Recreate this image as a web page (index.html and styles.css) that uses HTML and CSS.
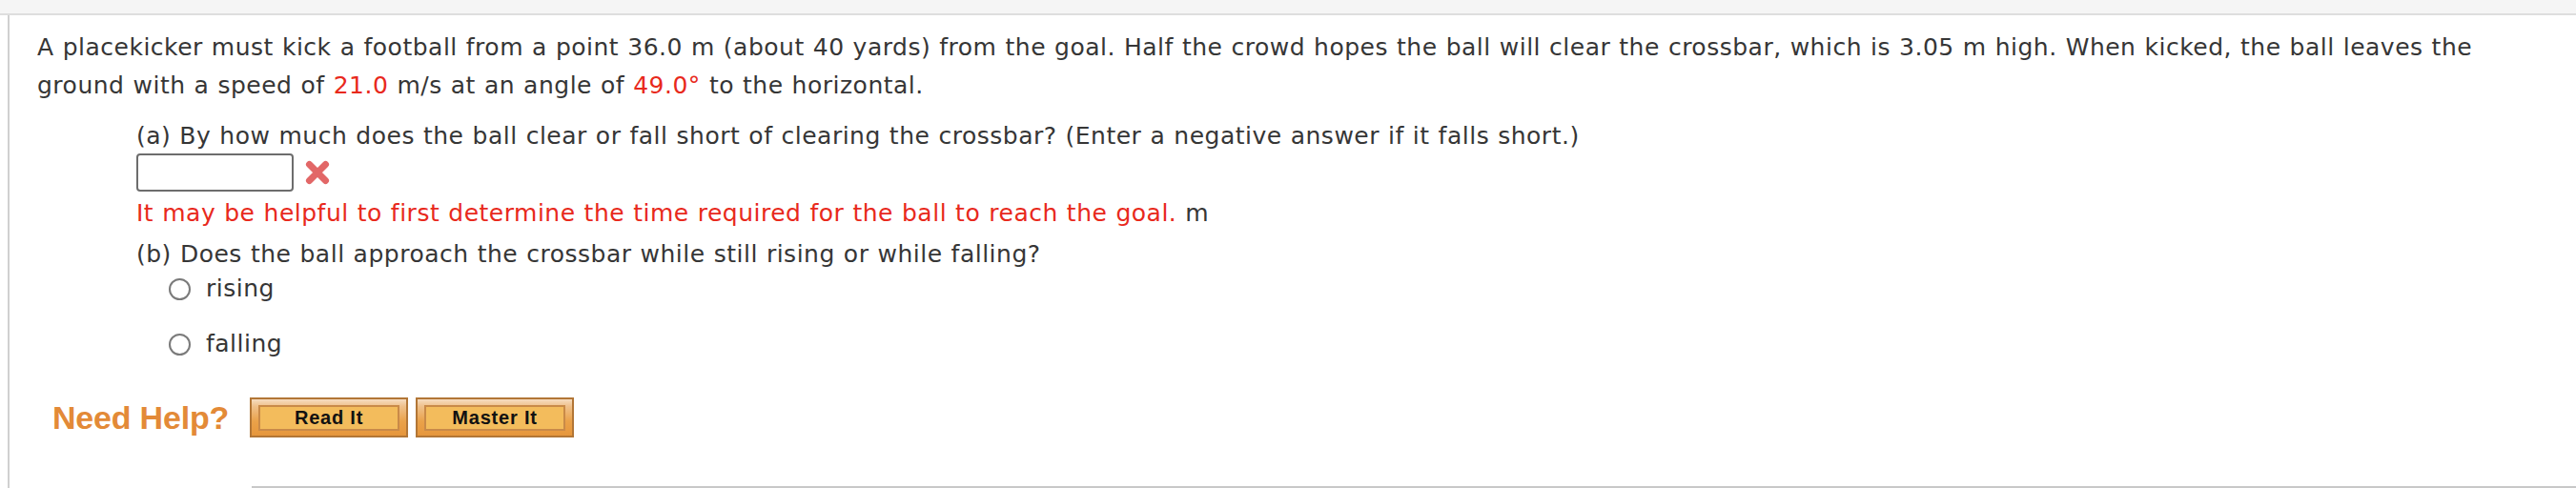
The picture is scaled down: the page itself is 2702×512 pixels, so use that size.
FILE: index.html
```html
<!DOCTYPE html>
<html lang="en">
<head>
<meta charset="utf-8">
<title>Question</title>
<link rel="stylesheet" href="styles.css">
</head>
<body>
<div class="topbar"></div>
<div class="panel">
  <p class="stem">A placekicker must kick a football from a point 36.0 m (about 40 yards) from the goal. Half the crowd hopes the ball will clear the crossbar, which is 3.05 m high. When kicked, the ball leaves the ground with a speed of <span class="val">21.0</span> m/s at an angle of <span class="val">49.0°</span> to the horizontal.</p>
  <div class="parts">
    <p class="q q-a">(a) By how much does the ball clear or fall short of clearing the crossbar? (Enter a negative answer if it falls short.)</p>
    <div class="answer-row">
      <input class="answer" type="text" aria-label="answer">
      <svg class="wrong" width="28" height="26" viewBox="0 0 28 26" aria-hidden="true">
        <path d="M5.5 4.5 L22.5 21.5 M22.5 4.5 L5.5 21.5" stroke="#e05a5a" stroke-opacity="0.92" stroke-width="7" stroke-linecap="round"/>
      </svg>
    </div>
    <p class="hint"><span class="hint-text">It may be helpful to first determine the time required for the ball to reach the goal.</span> m</p>
    <p class="q q-b">(b) Does the ball approach the crossbar while still rising or while falling?</p>
    <label class="choice"><span class="radio"></span>rising</label>
    <label class="choice choice-2"><span class="radio"></span>falling</label>
  </div>
  <div class="help">
    <span class="need-help">Need Help?</span>
    <button class="help-btn" type="button"><span class="help-inner">Read It</span></button>
    <button class="help-btn" type="button"><span class="help-inner">Master It</span></button>
  </div>
  <div class="bottom-rule"></div>
</div>
</body>
</html>
```

FILE: styles.css
```css
html, body {
  margin: 0;
  padding: 0;
  background: #ffffff;
}

body {
  font-family: "DejaVu Sans", Verdana, sans-serif;
  font-size: 25px;
  letter-spacing: 0.5px;
  color: #363636;
  overflow: hidden;
}

.topbar {
  height: 14px;
  background: #f5f5f5;
  border-bottom: 2px solid #dedede;
}

.panel {
  margin-left: 8px;
  border-left: 2px solid #d0d0d0;
  height: 496px;
  display: flex;
  flex-direction: column;
}

.stem {
  margin: 0;
  padding: 14px 40px 0 29px;
  line-height: 40px;
  word-spacing: 0.6px;
}

.val {
  color: #e8291c;
}

.parts {
  padding-left: 133px;
  display: flex;
  flex-direction: column;
  align-items: flex-start;
  word-spacing: 0.6px;
}

.q {
  margin: 0;
  line-height: 36px;
}

.q-a {
  margin-top: 15px;
}

.answer-row {
  display: flex;
  align-items: center;
  height: 40px;
  gap: 11px;
}

.answer {
  box-sizing: border-box;
  width: 165px;
  height: 40px;
  margin: 0;
  border: 2px solid #6d6d6d;
  border-radius: 4px;
  background: #fff;
  padding: 0 6px;
  font: inherit;
}

.wrong {
  display: block;
}

.hint {
  margin: 5px 0 0;
  line-height: 36px;
}

.hint-text {
  color: #e8291c;
}

.q-b {
  margin-top: 7px;
}

.choice {
  display: flex;
  align-items: center;
  gap: 16px;
  line-height: 36px;
  margin-left: 34px;
}

.choice-2 {
  margin-top: 22px;
}

.radio {
  box-sizing: border-box;
  width: 23px;
  height: 23px;
  border: 2px solid #7a7a7a;
  border-radius: 50%;
  background: #fff;
}

.help {
  display: flex;
  align-items: center;
  margin-top: 38px;
  padding-left: 45px;
  height: 42px;
  letter-spacing: 0;
}

.need-help {
  font-family: "Liberation Sans", Arial, sans-serif;
  font-weight: bold;
  font-size: 34px;
  color: #e38a37;
  margin-right: 22px;
  letter-spacing: -0.2px;
}

.help-btn {
  box-sizing: border-box;
  width: 166px;
  height: 42px;
  margin: 0 8px 0 0;
  padding: 6px 7px 5px 7px;
  border: 2px solid #b27636;
  background: linear-gradient(#f6dcc0 0%, #efc08a 20%, #eaa24a 60%, #e6963c 100%);
  cursor: pointer;
  display: flex;
}

.help-inner {
  flex: 1;
  display: flex;
  align-items: center;
  justify-content: center;
  border: 2px solid #c98a48;
  background: #f3bc5c;
  font-family: "Liberation Sans", Arial, sans-serif;
  font-weight: bold;
  font-size: 20px;
  letter-spacing: 0.8px;
  color: #111;
}

.bottom-rule {
  margin-top: auto;
  margin-left: 254px;
  height: 2px;
  background: #c8c8c8;
}
```
